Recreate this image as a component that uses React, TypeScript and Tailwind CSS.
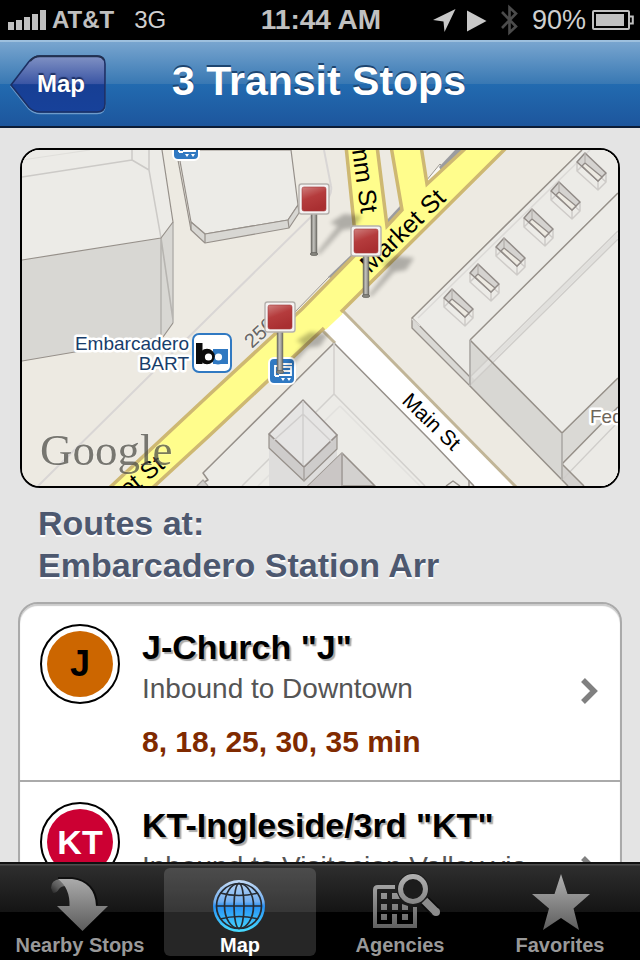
import type { ReactNode } from "react";

const SANS = "'Liberation Sans', Arial, sans-serif";
const SERIF = "'Liberation Serif', 'Times New Roman', serif";

function SignalBars() {
  return (
    <svg width="38" height="20" viewBox="0 0 38 20" fill="#c0c0c0" aria-hidden="true">
      <rect x="0" y="12" width="6" height="8" />
      <rect x="8" y="10" width="6" height="10" />
      <rect x="16" y="7" width="6" height="13" />
      <rect x="24" y="4" width="6" height="16" />
      <rect x="32" y="0" width="6" height="20" />
    </svg>
  );
}

function StatusBar() {
  return (
    <div className="grid h-10 shrink-0 grid-cols-[1fr_auto_1fr] items-center bg-black pl-2 pr-1.5 text-[#c0c0c0]">
      <div className="flex items-center gap-1.5">
        <SignalBars />
        <span className="text-2xl leading-10 font-bold">AT&amp;T</span>
        <span className="pl-3.5 text-2xl leading-10 text-[#cfcfcf]">3G</span>
      </div>
      <span className="text-[28px] leading-10 font-bold">11:44 AM</span>
      <div className="flex items-center justify-end">
        <svg width="54" height="23" viewBox="0 0 54 23" fill="#c8c8c8" aria-hidden="true">
          <path d="M0 11 22.500 0 11.500 23 10.500 12.500Z" />
          <path d="M34 1.500 53.500 12 34 22.500Z" />
        </svg>
        <svg className="ml-3.5" width="17" height="32" viewBox="0 0 17 32" fill="none" stroke="#4b4b4b" strokeWidth="2.600" aria-hidden="true">
          <path d="M1 8 15 22.500 8.500 28.500V3.500L15 9.500 1 24" />
        </svg>
        <span className="ml-3.5 mr-1.5 text-[27px] leading-10 text-[#cfcfcf]">90%</span>
        <svg width="42" height="20" viewBox="0 0 42 20" aria-hidden="true">
          <rect x="1" y="1" width="36" height="18" rx="1" fill="none" stroke="#c0c0c0" strokeWidth="2" />
          <rect x="4" y="4" width="28" height="12" fill="#c0c0c0" />
          <path d="M37 6.500H40.800V13.500H37" fill="none" stroke="#c0c0c0" strokeWidth="2" />
        </svg>
      </div>
    </div>
  );
}

function NavBar() {
  return (
    <header className="grid h-22 shrink-0 grid-cols-[1fr_auto_1fr] items-center border-t-2 border-b-2 border-t-[#9dc0de] border-b-[#0c1c36] bg-[linear-gradient(#78a5cf_0%,#3878b3_50%,#226bb0_50%,#1d569d_100%)] pr-3 pl-2.5">
      <button type="button" className="relative h-[58px] w-24 pl-1.5 text-2xl font-bold text-white [text-shadow:0_-2px_1px_rgba(10,25,70,0.7)]">
        <svg className="absolute inset-0" width="96" height="60" viewBox="0 0 96 60" aria-hidden="true">
          <defs>
            <linearGradient id="back" x1="0" y1="0" x2="0" y2="1">
              <stop offset="0" stopColor="#8192c4" />
              <stop offset="0.5" stopColor="#3a55a4" />
              <stop offset="0.51" stopColor="#173f94" />
              <stop offset="1" stopColor="#17419a" />
            </linearGradient>
          </defs>
          <path d="M1 31.500 19 8Q24 2.500 30 2.500H87Q95 2.500 95 10.500V50Q95 58.500 87 58.500H30Q24 58.500 19 54Z" fill="none" stroke="#6d9bcb" strokeWidth="1.500" />
          <path d="M1 30 19 6.500Q24 1 30 1H87Q95 1 95 9V49Q95 57 87 57H30Q24 57 19 52.500Z" fill="url(#back)" stroke="#1c2f63" strokeWidth="1.600" />
          <path d="M20 6Q24 1.200 30 1.200H87Q92 1.200 94 5" fill="none" stroke="#22304f" strokeWidth="2" />
        </svg>
        <span className="relative">Map</span>
      </button>
      <h1 className="pb-1.5 text-[41px] leading-12 font-bold text-white [text-shadow:0_-2px_0_#1d4570]">3 Transit Stops</h1>
    </header>
  );
}

function Pin({ x, y }: { x: number; y: number }) {
  return (
    <g transform={`translate(${x} ${y})`}>
      <path d="M2 55 24 27 16 24 30 15 48 17 40 29 28 31 6 55Z" fill="#000" opacity="0.26" filter="url(#soft)" />
      <rect x="-2.800" y="14" width="5.600" height="41" fill="url(#stem)" stroke="#66655f" strokeWidth="0.800" />
      <ellipse cx="0" cy="55" rx="3.800" ry="1.600" fill="#85847d" stroke="#55544f" strokeWidth="0.600" />
      <rect x="-15" y="-15" width="30" height="30" rx="2.500" fill="#f4f2f2" stroke="#b5b1ad" strokeWidth="1.400" />
      <rect x="-12" y="-12" width="24" height="24" rx="2" fill="url(#pinred)" stroke="#a53a3a" strokeWidth="0.600" />
    </g>
  );
}

function TransitBadge({ x, y }: { x: number; y: number }) {
  return (
    <g transform={`translate(${x} ${y})`}>
      <rect x="-13" y="-13" width="26" height="26" rx="5" fill="#3079c2" stroke="#fff" strokeWidth="2" />
      <path d="M-7 5V-5H-3V-7H10M-3 3V-4H9V4H-3M-7 5H-3M-1 0H9" fill="none" stroke="#fff" strokeWidth="1.800" />
      <path d="M-1 7H3L1 10ZM5 7H9L7 10Z" fill="#fff" />
    </g>
  );
}

const SKYLIGHTS = [
  [0, 0],
  [-26, 29],
  [-53, 56],
  [-81, 85],
  [-107, 111],
  [-133, 136],
];

function StopMap() {
  return (
    <svg className="block h-[336px] w-full" viewBox="22 150 596 336" preserveAspectRatio="xMidYMid slice" role="img" aria-label="Map of stops near Market St and Main St">
      <defs>
        <linearGradient id="pinred" x1="0" y1="0" x2="0.400" y2="1">
          <stop offset="0" stopColor="#cf7f7d" />
          <stop offset="0.5" stopColor="#b53c3d" />
          <stop offset="1" stopColor="#a92f31" />
        </linearGradient>
        <linearGradient id="stem">
          <stop offset="0" stopColor="#77766f" />
          <stop offset="0.450" stopColor="#c4c3be" />
          <stop offset="1" stopColor="#75746d" />
        </linearGradient>
        <filter id="soft" x="-30%" y="-30%" width="160%" height="160%">
          <feGaussianBlur stdDeviation="2" />
        </filter>
      </defs>
      <rect x="22" y="150" width="596" height="336" fill="#edeae2" />
      <path d="M38 486 216 310 322 206Q333 195 331 186L324 150" fill="none" stroke="#d9d6d5" strokeWidth="2" />

      <g strokeWidth="1.200" strokeLinejoin="round">
        <path d="M22 150H162L173 222 161 238 22 260Z" fill="#ecebe7" />
        <path d="M22 260 161 238 173 222V323L163 337 22 361Z" fill="#d8d7d3" />
        <path d="M161 238V337M173 222V323M161 238 173 320" fill="none" stroke="#b7b5b1" strokeWidth="1.600" />
        <path d="M22 177 132 160 149 170 161 238M132 160V150M149 170V150" fill="none" stroke="#cccac7" strokeWidth="1.500" />
        <path d="M22 160 90 150" stroke="#e0dfdb" />
        <path d="M162 150 173 222 161 238 22 260M173 323 163 337M22 361 163 337" fill="none" stroke="#96908a" />
        <path d="M178 150H291L298 205 288 220 205 234 191 222Z" fill="#ecebe7" stroke="#96908a" />
        <path d="M191 222 205 234 288 220 298 205 299 213 289 228 205 243 191 230Z" fill="#d8d7d3" stroke="#96908a" />
        <path d="M205 234V243M288 220 289 228M178 160 191 230" stroke="#96908a" />
      </g>

      <path d="M293 314 330 276 335 276 300 313Z" fill="#f4f3f0" stroke="#9c978f" strokeWidth="1" />
      <path d="M328 277 352 254 354 260 334 279Z" fill="#9b9ca0" />
      <path d="M386 221 400 206 403 211 388 226Z" fill="#9b9ca0" />
      <path d="M426 181 440 164 445 170 428 186Z" fill="#f8f7f4" stroke="#9c978f" strokeWidth="1" />
      <path d="M439 167 455 150H464L442 172Z" fill="#9b9ca0" />

      <path d="M322 330 343 311 518 489H474L430 440Z" fill="#fff" />
      <path d="M343 311 520 491" stroke="#c1b597" strokeWidth="3" />
      <path d="M322 330 335 343" stroke="#c1b597" strokeWidth="3" />
      <path
        d="M105 492 210 394 302 309 357 253 346 146H377L387 226 402 210 391 146H421L427 184 468 146H508L343 310 322 330 210 435 148 492Z"
        fill="#fffd8c"
        stroke="#ceb872"
        strokeWidth="3.500"
      />
      <path d="M324 328 341 312" stroke="#fffd8c" strokeWidth="5" />

      <g strokeLinejoin="round" strokeWidth="1.200">
        <path d="M334 343 210 466 203 473 208 480 197 486H474L430 440Z" fill="#ecebe7" />
        <path d="M334 343 203 473 208 480 197 486M334 343 430 440 474 486" fill="none" stroke="#96908a" strokeWidth="1.500" />
        <path d="M334 343V394L242 486M334 394 425 486" fill="none" stroke="#d2d0cd" strokeWidth="1.500" />
        <path d="M340 406 258 486M340 406 420 486" stroke="#e2e1de" strokeWidth="1.500" />
        <path d="M269 434 304 467 337 435V486H269Z" fill="#dedddc" />
        <path d="M342 453 308 486H375Z" fill="#d3d1cf" stroke="#96908a" strokeWidth="1.600" />
        <path d="M342 453 308 486H342Z" fill="#cac6c5" />
        <path d="M342 453V486" stroke="#aaa5a2" strokeWidth="2" />
        <path d="M269 434 304 467 337 435V449L304 481 269 448Z" fill="#cecccb" stroke="#96908a" />
        <path d="M303 400 337 435 304 467 269 434Z" fill="#e6e5e4" stroke="#968f8b" strokeWidth="1.600" />
        <path d="M304 467V481" stroke="#aaa5a2" strokeWidth="1.600" />
        <path d="M303 401V465M303 414 272 442M303 414 333 443" stroke="#d0cecd" strokeWidth="1.500" />
        <path d="M446 486 453 481 460 486M469 480V486" fill="none" stroke="#96908a" strokeWidth="1.500" />
        <path d="M197 486 203 480 208 486" fill="#d0cecb" stroke="#aaa5a2" />
      </g>

      <g strokeLinejoin="round" strokeWidth="1.300">
        <path d="M582 150H618V486H568L470 386 412 328V318Z" fill="#ecebe7" />
        <path d="M412 318 470 377V386L412 328Z" fill="#dad9d5" stroke="#96908a" />
        <path d="M470 340 562 433V480L470 386Z" fill="#d8d7d3" />
        <path d="M562 433 618 378V422L562 480Z" fill="#dad9d5" />
        <path d="M562 464 618 407V486H584Z" fill="#ebeae6" />
        <path d="M562 464 584 486H568L562 480Z" fill="#d3d1ce" />
        <path d="M418 318 590 150M412 319 420 326" fill="none" stroke="#dcdad7" strokeWidth="1.500" />
        <path d="M470 377 618 231M470 385 618 239" fill="none" stroke="#cfcdca" strokeWidth="1.500" />
        <path d="M473 378 618 235" stroke="#e1e0dd" strokeWidth="4" />
        <path d="M562 480 618 422" stroke="#cfcdca" />
        <path d="M412 318 582 150M470 340 618 193M470 340 562 433 618 378M470 386 568 486M562 464 618 407M562 464 584 486" fill="none" stroke="#969089" strokeWidth="1.500" />
        <path d="M470 340V386M562 433V480" stroke="#b1afab" strokeWidth="1.800" />
        {SKYLIGHTS.map(([dx, dy]) => (
          <g key={dx} transform={`translate(${dx} ${dy})`}>
            <path d="M577 162V171L598 190 606 182V173M598 181V190M577 171 585 163 606 182" fill="none" stroke="#cecbc8" strokeWidth="1.500" />
            <path d="M585 153 606 173 598 181 577 162Z" fill="#d5d3d0" stroke="#918b87" strokeWidth="1.500" />
            <path d="M582 166 585 163 602 177 598 181Z" fill="#edeae2" stroke="#918b87" />
            <path d="M585 153V163" stroke="#b5b1ae" />
          </g>
        ))}
      </g>

      <g fontFamily={SANS}>
        <text transform="translate(370 274) rotate(-44)" fontSize="25">Market St</text>
        <text transform="translate(361 214) rotate(82)" fontSize="25" textAnchor="end">Drumm St</text>
        <text transform="translate(401 402) rotate(44)" fontSize="21">Main St</text>
        <text transform="translate(166 467) rotate(-39)" fontSize="24" textAnchor="end">Market St</text>
        <text transform="translate(252 349) rotate(-43)" fontSize="20" fill="#666" stroke="#f3f1ea" strokeWidth="2" paintOrder="stroke">250</text>
        <g fontSize="19" stroke="#fff" strokeWidth="5" strokeLinejoin="round" paintOrder="stroke">
          <text x="189" y="350" textAnchor="end" fill="#173d6b">Embarcadero</text>
          <text x="189" y="370" textAnchor="end" fill="#173d6b">BART</text>
          <text x="590" y="423" fill="#6f665b">Fed</text>
        </g>
      </g>

      <rect x="193" y="334" width="38" height="38" rx="6" fill="#fff" stroke="#3079c2" strokeWidth="2" />
      <rect x="213" y="349" width="15" height="15" fill="#3079c2" />
      <circle cx="218" cy="357" r="7.500" fill="#3079c2" />
      <circle cx="218.500" cy="357" r="3.600" fill="#fff" />
      <rect x="196" y="343" width="6.500" height="21" fill="#0c0c0c" />
      <circle cx="207" cy="356.500" r="7.800" fill="#0c0c0c" />
      <circle cx="208.500" cy="357" r="3.600" fill="#fff" />
      <TransitBadge x={186} y={147} />
      <TransitBadge x={282} y={371} />

      <text x="40" y="465" fontFamily={SERIF} fontSize="45" fill="#4f4f4a" opacity="0.750" stroke="#fff" strokeOpacity="0.250" strokeWidth="1.500" paintOrder="stroke">
        Google
      </text>

      <Pin x={314} y={199} />
      <Pin x={366} y={241} />
      <Pin x={280} y={317} />
    </svg>
  );
}

type Route = { code: string; badge: string; name: string; direction: string; times?: string };

const ROUTES: Route[] = [
  { code: "J", badge: "bg-[#cc6600] text-black text-4xl", name: 'J-Church "J"', direction: "Inbound to Downtown", times: "8, 18, 25, 30, 35 min" },
  { code: "KT", badge: "bg-[#cc0033] text-white text-[34px]", name: 'KT-Ingleside/3rd "KT"', direction: "Inbound to Visitacion Valley via" },
];

function RouteRow({ route }: { route: Route }) {
  return (
    <li className="border-b-2 border-[#aaa]">
      <a href="#route" className="flex min-h-44 gap-[22px] px-5 pt-5 pb-[18px]">
        <span className="flex size-20 shrink-0 items-center justify-center rounded-full border-2 border-black bg-white">
          <span className={`flex size-[66px] items-center justify-center rounded-full font-bold ${route.badge}`}>{route.code}</span>
        </span>
        <span className="flex min-w-0 flex-1 flex-col">
          <span className="text-[34px] leading-[46px] font-bold text-black [text-shadow:2px_2px_1px_#aaa]">{route.name}</span>
          <span className="text-[28px] leading-[38px] text-[#555]">{route.direction}</span>
          {route.times && <span className="mt-3.5 text-3xl leading-10 font-bold text-[#802a00]">{route.times}</span>}
        </span>
        <svg className="mb-1 shrink-0 self-center" width="20" height="26" viewBox="0 0 20 26" fill="none" stroke="#808080" strokeWidth="5.500" aria-hidden="true">
          <path d="M3 2 14 13 3 24" />
        </svg>
      </a>
    </li>
  );
}

function Tab({ label, selected, viewBox, children }: { label: string; selected?: boolean; viewBox: string; children: ReactNode }) {
  return (
    <button
      type="button"
      aria-current={selected ? "page" : undefined}
      className={`mx-1 flex flex-col items-center justify-end overflow-hidden rounded-md text-xl leading-[22px] font-bold whitespace-nowrap ${selected ? "bg-white/15 text-white" : "text-[#999]"}`}
    >
      <svg width="152" height="66" viewBox={viewBox} aria-hidden="true">
        {children}
      </svg>
      {label}
    </button>
  );
}

function TabBar() {
  return (
    <nav className="grid h-[98px] shrink-0 grid-cols-4 border-t-2 border-[#111] bg-[linear-gradient(#4d4d4d_0px,#4d4d4d_1px,#2e2e2e_2px,#141414_48px,#000_48px)] pt-1 pb-1">
      <Tab label="Nearby Stops" viewBox="4 868 152 66">
        <defs>
          <linearGradient id="icon" gradientUnits="userSpaceOnUse" x1="0" y1="874" x2="0" y2="932">
            <stop offset="0" stopColor="#b2b2b2" />
            <stop offset="1" stopColor="#5a5a5a" />
          </linearGradient>
          <linearGradient id="tail" x1="1" y1="0" x2="0" y2="1">
            <stop offset="0" stopColor="#8d8d8d" />
            <stop offset="0.600" stopColor="#5b5b5b" />
            <stop offset="1" stopColor="#222" />
          </linearGradient>
        </defs>
        <path d="M58 878H72Q96 882 97 905" fill="none" stroke="#000" strokeOpacity="0.600" strokeWidth="2" />
        <path d="M60 879Q51 880 51 888L53 893Q57 893 59 889Q61 886 66 886L68 880Z" fill="url(#tail)" />
        <path d="M58 879H72Q95 882 96 906H108L82.500 931 57 906H69.500Q70 888 58 879Z" fill="url(#icon)" />
      </Tab>
      <Tab label="Map" selected viewBox="164 868 152 66">
        <defs>
          <linearGradient id="globe" x1="0" y1="0" x2="0" y2="1">
            <stop offset="0" stopColor="#c3daf5" />
            <stop offset="0.420" stopColor="#71aef0" />
            <stop offset="0.500" stopColor="#2891f5" />
            <stop offset="1" stopColor="#48dcff" />
          </linearGradient>
        </defs>
        <circle cx="239" cy="906" r="26" fill="url(#globe)" />
        <g fill="none" stroke="#262b32" strokeWidth="1.700">
          <circle cx="239" cy="906" r="22.500" />
          <ellipse cx="239" cy="906" rx="5" ry="22.500" />
          <ellipse cx="239" cy="906" rx="14.500" ry="22.500" />
          <path d="M216.500 906H261.500M220 893Q239 898 258 893M220 919Q239 914 258 919" />
        </g>
      </Tab>
      <Tab label="Agencies" viewBox="324 868 152 66">
        <path d="M395 887H378Q375 887 375 890V926H415V907" fill="none" stroke="url(#icon)" strokeWidth="4" />
        <g fill="url(#icon)">
          <path d="M381 893h6v6h-6zM392 893h5l3 6h-8zM381 904h6v6h-6zM392 904h6v6h-6zM402 904l6 2v4h-6zM381 914h6v6h-6zM392 914h5v12h-5zM402 914h6v6h-6z" />
        </g>
        <circle cx="413" cy="889" r="16" fill="#1c1c1c" />
        <circle cx="413" cy="889" r="12.500" fill="none" stroke="url(#icon)" strokeWidth="5" />
        <path d="M425 901 436 912" stroke="#0c0c0c" strokeWidth="11" />
        <path d="M424.500 900.500 436 912" stroke="#8c8c8c" strokeWidth="8" />
        <circle cx="436" cy="912" r="4" fill="#8c8c8c" />
      </Tab>
      <Tab label="Favorites" viewBox="484 868 152 66">
        <path d="M561 874 567.500 894H590L573.500 908.500 579 930 561 918 543 930 549 908.500 532 894H554.500Z" fill="url(#icon)" />
      </Tab>
    </nav>
  );
}

export default function App() {
  return (
    <div className="flex h-screen flex-col overflow-hidden bg-[#e4e4e4] font-['Liberation_Sans',Arial,sans-serif]">
      <StatusBar />
      <NavBar />
      <main className="min-h-0 flex-1 overflow-hidden pt-5">
        <div className="mx-5 overflow-hidden rounded-[20px] border-2 border-black">
          <StopMap />
        </div>
        <h2 className="mx-[38px] mt-3.5 text-[34px] leading-[42px] font-bold text-[#4d586f] [text-shadow:0_2px_0_#fff]">
          Routes at:
          <br />
          Embarcadero Station Arr
        </h2>
        <ul className="mx-[18px] mt-4 rounded-t-[20px] border-2 border-[#aaa] bg-white shadow-[inset_0_2px_1px_#ccc]">
          {ROUTES.map((route) => (
            <RouteRow key={route.code} route={route} />
          ))}
        </ul>
      </main>
      <TabBar />
    </div>
  );
}
